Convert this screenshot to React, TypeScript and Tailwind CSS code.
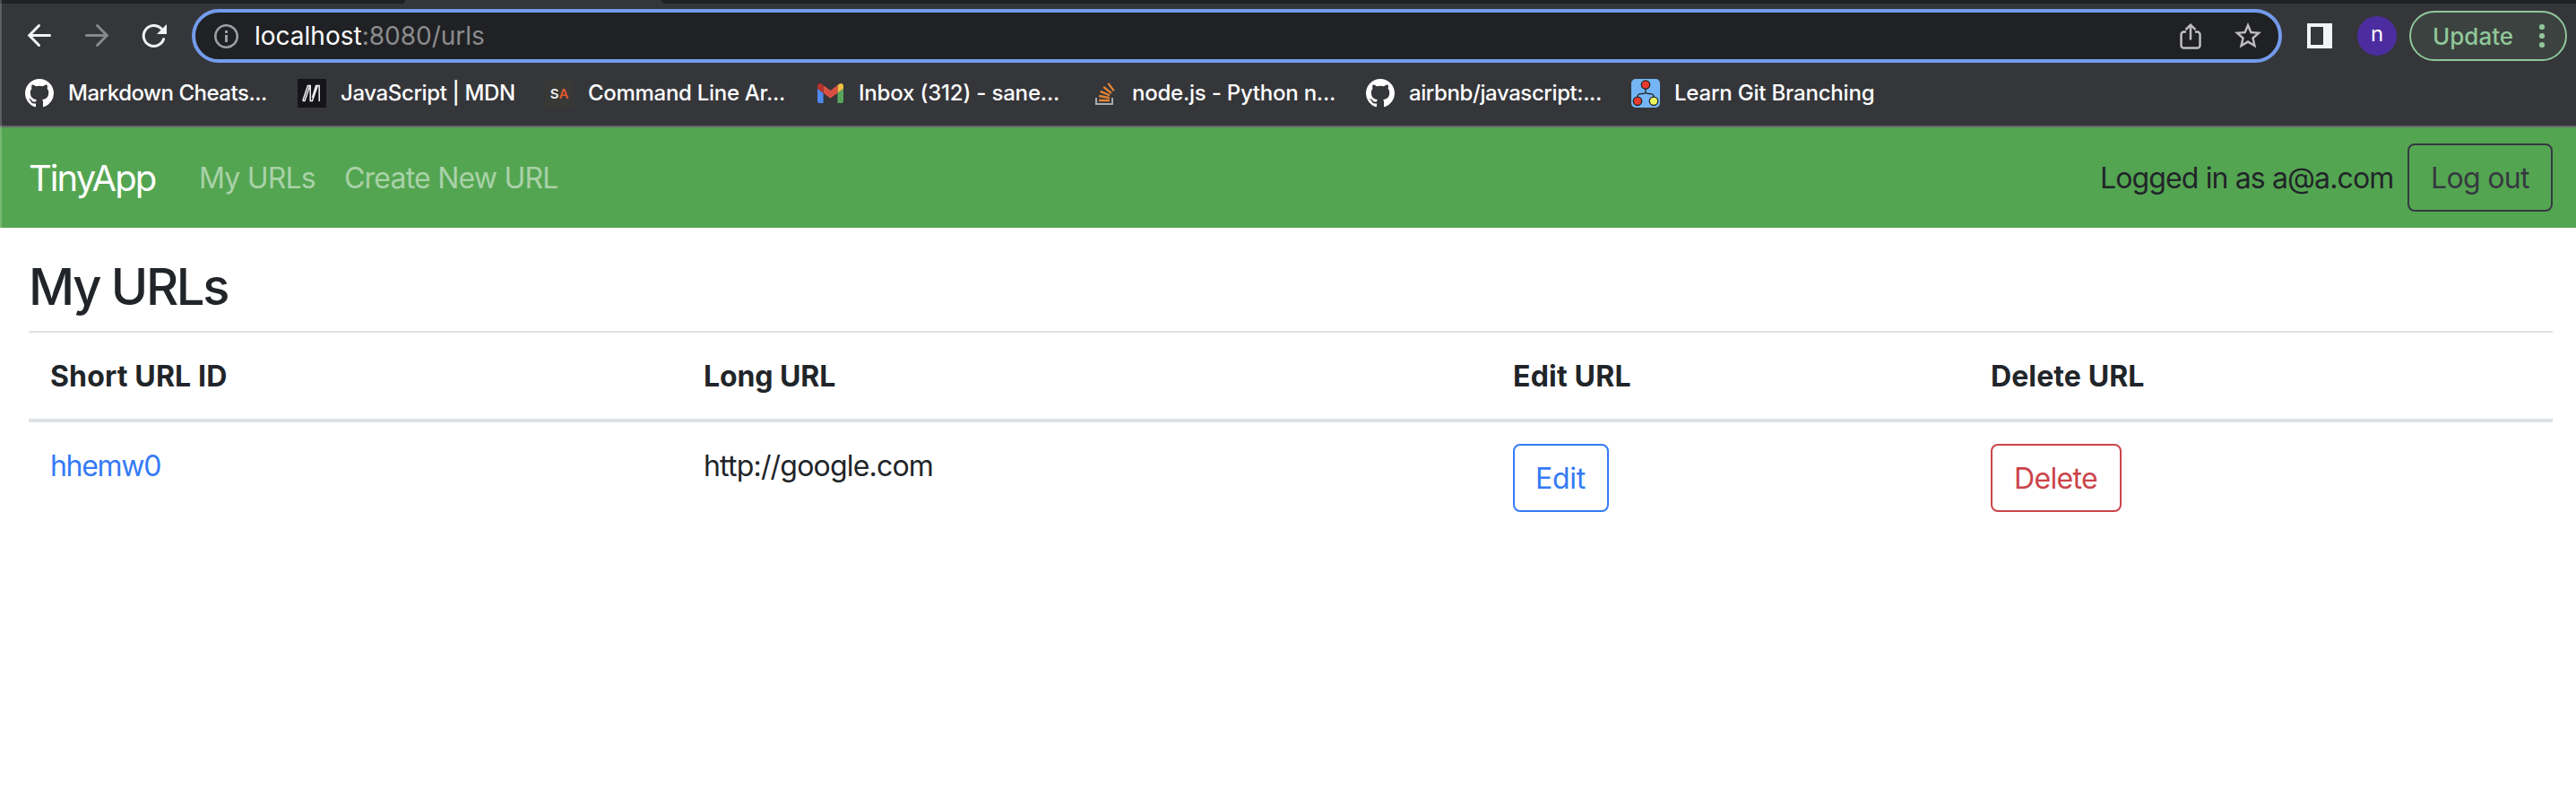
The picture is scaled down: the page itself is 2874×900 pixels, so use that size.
import type { ReactNode } from "react";
import { MdStarBorder } from "react-icons/md";

function GithubMark() {
  return (
    <svg viewBox="0 0 16 16" className="size-8" fill="#fff">
      <path d="M8 0C3.58 0 0 3.58 0 8c0 3.54 2.29 6.53 5.47 7.59.4.07.55-.17.55-.38 0-.19-.01-.82-.01-1.49-2.01.37-2.53-.49-2.69-.94-.09-.23-.48-.94-.82-1.13-.28-.15-.68-.52-.01-.53.63-.01 1.08.58 1.23.82.72 1.21 1.87.87 2.33.66.07-.52.28-.87.51-1.07-1.78-.2-3.64-.89-3.64-3.95 0-.87.31-1.59.82-2.15-.08-.2-.36-1.02.08-2.12 0 0 .67-.21 2.2.82.64-.18 1.32-.27 2-.27.68 0 1.36.09 2 .27 1.53-1.04 2.2-.82 2.2-.82.44 1.1.16 1.92.08 2.12.51.56.82 1.27.82 2.15 0 3.07-1.87 3.75-3.65 3.95.29.25.54.73.54 1.48 0 1.07-.01 1.93-.01 2.2 0 .21.15.46.55.38A8.013 8.013 0 0016 8c0-4.42-3.58-8-8-8z" />
    </svg>
  );
}

function MdnMark() {
  return (
    <svg viewBox="0 0 32 32" className="size-8" fill="none" stroke="#f0f0f2" strokeWidth="1.5">
      <rect width="32" height="32" fill="#15141a" stroke="none" />
      <path d="M5.8 24.5H8L13.6 8M5.8 24.5L11.4 7.6H14.2V24.5H16.4L22.2 8M16.4 21L20.6 7.6H24.2V25" />
    </svg>
  );
}

function SaMark() {
  return (
    <span className="flex size-8 items-center justify-center bg-[#383836] font-['Inter',sans-serif] text-[15px] leading-none font-semibold">
      <span className="text-[#f0f0f0]">S</span>
      <span className="text-[#e0592d]">A</span>
    </span>
  );
}

function GmailMark() {
  return (
    <span className="flex size-8 items-center justify-center">
      <svg viewBox="52 42 88 66" className="h-[22px] w-[29px]">
        <path fill="#5087ec" d="M58 108h14V74L52 59v43c0 3.32 2.69 6 6 6" />
        <path fill="#58a55c" d="M120 108h14c3.32 0 6-2.69 6-6V59l-20 15" />
        <path fill="#f2be42" d="M120 48v26l20-15v-8c0-7.42-8.47-11.65-14.4-7.2" />
        <path fill="#d85140" d="M72 74V48l24 18 24-18v26L96 92" />
        <path fill="#b5342b" d="M52 51v8l20 15V48l-5.6-4.2c-5.94-4.45-14.4-.22-14.4 7.2" />
      </svg>
    </span>
  );
}

function StackMark() {
  return (
    <svg viewBox="0 0 32 32" className="size-8" fill="none">
      <path d="M5 21V28H23V21" stroke="#a7aaad" strokeWidth="2" />
      <path
        d="M8 24H20M8.2 19L20 21.2M9.7 13.9L20.2 18.3M13.2 9L22 15.8M18.4 4.9L24.8 13.4"
        stroke="#e38435"
        strokeWidth="2.3"
      />
    </svg>
  );
}

function BranchMark() {
  return (
    <svg viewBox="0 0 32 32" className="size-8" fill="none" stroke="#222" strokeWidth="1.3">
      <rect width="32" height="32" rx="5" fill="#74b6f5" stroke="none" />
      <path d="M16 11V15M7 20C7 16 10 17 13 16.5C15 16.2 16 15.5 16 15C16 15.5 17 16.2 19 16.5C22 17 25 16 25 20" />
      <circle cx="16" cy="6.5" r="4.7" fill="#e83a2d" />
      <circle cx="7" cy="24.8" r="4.7" fill="#e83a2d" />
      <circle cx="25" cy="24.8" r="4.7" fill="#ecf65c" />
    </svg>
  );
}

const bookmarks: { icon: ReactNode; label: string; box: string; text: string }[] = [
  { icon: <GithubMark />, label: "Markdown Cheats...", box: "w-[304px] gap-4", text: "tracking-[-0.48px]" },
  { icon: <MdnMark />, label: "JavaScript | MDN", box: "w-[276px] gap-4", text: "tracking-[-0.38px]" },
  { icon: <SaMark />, label: "Command Line Ar...", box: "w-[302px] gap-4", text: "tracking-[-0.29px]" },
  { icon: <GmailMark />, label: "Inbox (312) - sane...", box: "w-[308px] gap-4", text: "tracking-[-0.18px]" },
  { icon: <StackMark />, label: "node.js - Python n...", box: "w-[306px] gap-[13px]", text: "tracking-[-0.23px]" },
  { icon: <GithubMark />, label: "airbnb/javascript:...", box: "w-[296px] gap-4", text: "tracking-[-0.41px]" },
  { icon: <BranchMark />, label: "Learn Git Branching", box: "w-[290px] gap-4", text: "tracking-[-0.2px]" },
];

function BrowserChrome() {
  return (
    <header className="h-[142px] border-b-2 border-[#66646a] bg-[#35363a]">
      <div className="flex h-1 justify-between">
        <div className="w-[452px] rounded-br-[8px] bg-[#202124]" />
        <div className="w-[2136px] rounded-bl-[8px] bg-[#202124]" />
      </div>
      <div className="mt-1.5 flex h-[60px] items-center pr-[10px] pl-7">
        <div className="flex gap-8">
          <svg viewBox="0 0 32 32" className="size-8" fill="none" stroke="#f1f3f4" strokeWidth="3" strokeLinecap="round">
            <path d="M27.5 15.5H5M15.5 4.5L4.7 15.5L15.5 26.5" />
          </svg>
          <svg viewBox="0 0 32 32" className="size-8" fill="none" stroke="#87888a" strokeWidth="3" strokeLinecap="round">
            <path d="M4.5 15.5H27M16.5 4.5L27.3 15.5L16.5 26.5" />
          </svg>
          <svg viewBox="0 0 32 32" className="size-8" fill="none">
            <path d="M24 8A11.5 11.5 0 1 0 26.6 19.6" stroke="#f1f3f4" strokeWidth="3" strokeLinecap="round" />
            <path d="M30 3V14H19Z" fill="#f1f3f4" />
          </svg>
        </div>
        <div className="ml-[26px] flex h-[60px] flex-1 items-center rounded-full border-4 border-[#739bec] bg-[#202124] pr-4 pl-5">
          <svg viewBox="0 0 28 28" className="size-7" fill="none">
            <circle cx="14.5" cy="14.5" r="12.2" stroke="#9aa0a6" strokeWidth="2.6" />
            <path d="M13 8h3v3h-3zM13 13h3v8h-3z" fill="#9aa0a6" />
          </svg>
          <span className="ml-[18px] text-[28px] leading-none whitespace-nowrap text-[#8b8c8e]">
            <span className="text-white">localhost</span>:8080/urls
          </span>
          <svg viewBox="0 0 32 32" className="ml-auto size-8" fill="none" stroke="#bebebf" strokeWidth="2.5">
            <path d="M11 11.5H8.5A3 3 0 0 0 5.5 14.5V26.5A3 3 0 0 0 8.5 29.5H23.5A3 3 0 0 0 26.5 26.5V14.5A3 3 0 0 0 23.5 11.5H21M16 20.5V4M10.5 9.2L16 3.7L21.5 9.2" />
          </svg>
          <MdStarBorder className="ml-[30px] size-9 text-[#bebebf]" />
        </div>
        <svg viewBox="0 0 28 28" className="ml-7 size-7">
          <path d="M0 0H28V28H0ZM4 4V24H18V4Z" fill="#f1f3f4" fillRule="evenodd" />
        </svg>
        <div className="ml-7 flex size-11 items-center justify-center rounded-full bg-[#4b2da0] text-[24px] leading-none text-white">
          <span className="-mt-1">n</span>
        </div>
        <div className="ml-[14px] flex h-14 w-44 items-center rounded-full border-2 border-[#8fc799] bg-[#3c4240] pl-6 text-[26px] leading-none font-medium text-[#8fc799]">
          <span className="pt-0.5">Update</span>
          <svg viewBox="0 0 8 28" className="ml-7 h-7 w-2" fill="#8fc799">
            <circle cx="4" cy="4" r="3.1" />
            <circle cx="4" cy="14" r="3.1" />
            <circle cx="4" cy="24" r="3.1" />
          </svg>
        </div>
      </div>
      <div className="flex h-[68px] items-center pl-7">
        {bookmarks.map((b) => (
          <div key={b.label} className={`flex items-center ${b.box}`}>
            {b.icon}
            <span className={`text-[24px] leading-[30px] font-medium whitespace-nowrap text-white ${b.text}`}>
              {b.label}
            </span>
          </div>
        ))}
      </div>
    </header>
  );
}

function NavBar() {
  return (
    <nav className="flex h-28 items-center justify-between bg-[#54a551] pr-[26px] pl-8 text-[32px] leading-[48px] whitespace-nowrap">
      <div className="flex items-center pt-0.5">
        <a className="w-[190px] text-[40px] tracking-[-1.95px] text-white">TinyApp</a>
        <a className="w-[162px] tracking-[-0.8px] text-white/50">My URLs</a>
        <a className="tracking-[-0.78px] text-white/50">Create New URL</a>
      </div>
      <div className="flex items-center">
        <span className="w-[343px] pt-0.5 tracking-[-0.87px] text-[#212529]">Logged in as a@a.com</span>
        <button className="h-[76px] w-[162px] rounded-lg border-2 border-[#343a40] pt-0.5 pl-6 text-left tracking-[-0.67px] text-[#343a40]">
          Log out
        </button>
      </div>
    </nav>
  );
}

function UrlTable() {
  return (
    <div className="mt-[15px] text-[32px] leading-[48px] whitespace-nowrap">
      <div className="grid grid-cols-[729px_903px_533px_1fr] border-t-2 border-b-4 border-[#dee2e6] font-bold *:px-6 *:pt-[25px] *:pb-[23px]">
        <div className="tracking-[0.15px]">Short URL ID</div>
        <div className="tracking-[-0.1px]">Long URL</div>
        <div className="tracking-[0.2px]">Edit URL</div>
        <div className="tracking-[0.1px]">Delete URL</div>
      </div>
      <div className="grid grid-cols-[729px_903px_533px_1fr] *:p-6">
        <div className="mt-px">
          <a className="tracking-[-1.3px] text-[#347bf7]">hhemw0</a>
        </div>
        <div className="mt-px tracking-[-0.8px]">http://google.com</div>
        <div>
          <button className="block h-[76px] w-[107px] rounded-lg border-2 border-[#347bf7] pt-0.5 pl-[23px] text-left tracking-[-0.3px] text-[#347bf7]">
            Edit
          </button>
        </div>
        <div>
          <button className="block h-[76px] w-[146px] rounded-lg border-2 border-[#cb444a] pt-0.5 pl-6 text-left tracking-[-0.66px] text-[#cb444a]">
            Delete
          </button>
        </div>
      </div>
    </div>
  );
}

export default function App() {
  return (
    <div className="relative h-[900px] w-[2874px] overflow-hidden bg-white font-['Inter',sans-serif] text-[#212529]">
      <BrowserChrome />
      <NavBar />
      <main className="pt-[33px] pr-[26px] pl-8">
        <h3 className="text-[56px] leading-[67px] font-medium tracking-[-2.3px]">My URLs</h3>
        <UrlTable />
      </main>
      <div className="absolute top-0 left-0 h-[254px] w-0.5 bg-white/20" />
    </div>
  );
}
